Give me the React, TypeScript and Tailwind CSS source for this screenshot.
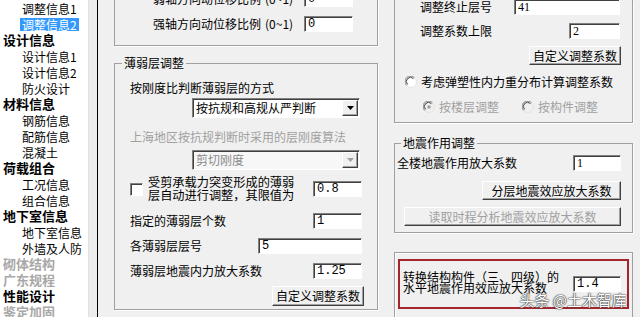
import React from "react";

const sunken =
  "border border-t-[#808080] border-l-[#808080] border-b-white border-r-white shadow-[inset_1px_1px_0_#404040]";
const raised =
  "border border-t-white border-l-white border-b-[#404040] border-r-[#404040] shadow-[inset_-1px_-1px_0_#a0a0a0]";

type Item = { t: string; lvl: number; sel?: boolean; dis?: boolean };
const tree: Item[] = [
  { t: "调整信息1", lvl: 1 },
  { t: "调整信息2", lvl: 1, sel: true },
  { t: "设计信息", lvl: 0 },
  { t: "设计信息1", lvl: 1 },
  { t: "设计信息2", lvl: 1 },
  { t: "防火设计", lvl: 1 },
  { t: "材料信息", lvl: 0 },
  { t: "钢筋信息", lvl: 1 },
  { t: "配筋信息", lvl: 1 },
  { t: "混凝土", lvl: 1 },
  { t: "荷载组合", lvl: 0 },
  { t: "工况信息", lvl: 1 },
  { t: "组合信息", lvl: 1 },
  { t: "地下室信息", lvl: 0 },
  { t: "地下室信息", lvl: 1 },
  { t: "外墙及人防", lvl: 1 },
  { t: "砌体结构", lvl: 0, dis: true },
  { t: "广东规程", lvl: 0, dis: true },
  { t: "性能设计", lvl: 0 },
  { t: "鉴定加固", lvl: 0, dis: true },
];

function Sidebar() {
  return (
    <div className="w-[88px] shrink-0 bg-white flex flex-col">
      {tree.map((it, i) => (
        <div key={i} className="h-[16px] shrink-0 flex items-center">
          {it.lvl === 0 ? (
            <span
              className={`pl-[3px] text-[13px] leading-[14px] font-bold ${
                it.dis ? "text-[#a8a8a8]" : "text-black"
              }`}
            >
              {it.t}
            </span>
          ) : (
            <span
              className={`ml-[20px] px-[2px] text-[12px] leading-[13px] ${
                it.sel ? "bg-[#3399ff] text-white" : "text-black"
              }`}
            >
              {it.t}
            </span>
          )}
        </div>
      ))}
    </div>
  );
}

function Input({ v, w, serif }: { v: string; w: string; serif?: boolean }) {
  return (
    <div
      className={`${sunken} ${w} h-[16px] shrink-0 bg-white flex items-center pl-[3px] text-[12px] leading-[14px] ${
        serif
          ? "font-['Liberation_Serif',serif]"
          : "font-['Liberation_Mono',monospace]"
      }`}
    >
      {v}
    </div>
  );
}

function Arrow({ color }: { color: string }) {
  return (
    <svg width="7" height="4" viewBox="0 0 7 4">
      <path d="M0 0H7L3.5 4Z" fill={color} />
    </svg>
  );
}

function Select({ v, disabled }: { v: string; disabled?: boolean }) {
  return (
    <div
      className={`${sunken} ml-[62px] w-[168px] h-[20px] flex ${
        disabled ? "bg-[#f7f7f7]" : "bg-white"
      }`}
    >
      <div
        className={`flex-1 flex items-center pl-[3px] ${
          disabled ? "text-[#8a8a8a]" : "text-black"
        }`}
      >
        {v}
      </div>
      <div
        className={`${raised} w-[16px] m-[1px] bg-[#f0f0f0] flex items-center justify-center`}
      >
        <Arrow color={disabled ? "#a0a0a0" : "#000"} />
      </div>
    </div>
  );
}

function Button({
  children,
  w,
  h,
  disabled,
  cls,
}: {
  children: React.ReactNode;
  w: string;
  h: string;
  disabled?: boolean;
  cls?: string;
}) {
  return (
    <div
      className={`${raised} ${w} ${h} ${cls ?? ""} bg-[#f0f0f0] flex items-center justify-center text-[12px] leading-[14px] ${
        disabled ? "text-[#a0a0a0]" : "text-black"
      }`}
    >
      {children}
    </div>
  );
}

function Radio({ checked, disabled }: { checked?: boolean; disabled?: boolean }) {
  return (
    <svg width="12" height="12" viewBox="0 0 12 12" className="shrink-0">
      <circle cx="6" cy="6" r="5.5" fill={disabled ? "#f0f0f0" : "#fff"} stroke="#e3e3e3" />
      <path d="M1.6 9.4 A5.2 5.2 0 0 1 9.4 1.6" stroke="#808080" fill="none" />
      <path d="M2.6 8.4 A4 4 0 0 1 8.4 2.6" stroke="#404040" fill="none" />
      {checked && <circle cx="6" cy="6" r="1.8" fill={disabled ? "#a0a0a0" : "#000"} />}
    </svg>
  );
}

function LeftColumn() {
  return (
    <div className="w-[264px] shrink-0 flex flex-col">
      {/* top (cut-off) group */}
      <div className="h-[46px] border-l border-r border-b border-[#a0a0a0] shadow-[1px_1px_0_#fff] flex flex-col pl-[38px] pr-[24px]">
        <div className="-mt-[9px] h-[16px] flex items-center justify-between">
          <span>
            弱轴方向动位移比例<span className="ml-[4px]">(0~1)</span>
          </span>
          <Input v="0" w="w-[49px]" />
        </div>
        <div className="mt-[9px] h-[16px] flex items-center justify-between">
          <span>
            强轴方向动位移比例<span className="ml-[4px]">(0~1)</span>
          </span>
          <Input v="0" w="w-[49px]" />
        </div>
      </div>

      <fieldset className="mt-[10px] border border-[#a0a0a0] shadow-[1px_1px_0_#fff] min-w-0">
        <legend className="ml-[7px] px-[2px] leading-[14px]">薄弱层调整</legend>
        <div className="flex flex-col pl-[15px] pr-[15px] pb-[3px]">
          <div className="mt-[11px] h-[14px] flex items-center">按刚度比判断薄弱层的方式</div>
          <div className="mt-[3px]">
            <Select v="按抗规和高规从严判断" />
          </div>
          <div className="mt-[12px] h-[14px] flex items-center text-[#a0a0a0]">
            上海地区按抗规判断时采用的层刚度算法
          </div>
          <div className="mt-[6px]">
            <Select v="剪切刚度" disabled />
          </div>
          <div className="mt-[6px] h-[26px] flex items-center">
            <div className={`${sunken} w-[13px] h-[13px] bg-white shrink-0`} />
            <div className="ml-[5px] w-[150px] leading-[13px] text-[12.2px]">
              受剪承载力突变形成的薄弱
              <br />
              层自动进行调整，其限值为
            </div>
            <div className="ml-auto">
              <Input v="0.8" w="w-[49px]" />
            </div>
          </div>
          <div className="mt-[11px] h-[16px] flex items-center justify-between">
            <span>指定的薄弱层个数</span>
            <Input v="1" w="w-[49px]" />
          </div>
          <div className="mt-[9px] h-[16px] flex items-center justify-between">
            <span>各薄弱层层号</span>
            <Input v="5" w="w-[104px]" />
          </div>
          <div className="mt-[9px] h-[16px] flex items-center justify-between">
            <span>薄弱层地震内力放大系数</span>
            <Input v="1.25" w="w-[49px]" />
          </div>
          <div className="mt-[7px] flex justify-end -mr-[2px]">
            <Button w="w-[92px]" h="h-[20px]">
              自定义调整系数
            </Button>
          </div>
        </div>
      </fieldset>
    </div>
  );
}

function RightColumn() {
  return (
    <div className="w-[239px] shrink-0 flex flex-col">
      {/* top (cut-off) group */}
      <div className="border-l border-r border-b border-[#a0a0a0] shadow-[1px_1px_0_#fff] flex flex-col pb-[8px]">
        <div className="-mt-[1px] h-[16px] flex items-center pl-[25px] pr-[12px]">
          <span>调整终止层号</span>
          <div className="ml-auto">
            <Input v="41" w="w-[106px]" serif />
          </div>
        </div>
        <div className="mt-[8px] h-[16px] flex items-center pl-[25px] pr-[12px]">
          <span>调整系数上限</span>
          <div className="ml-auto">
            <Input v="2" w="w-[51px]" serif />
          </div>
        </div>
        <div className="mt-[7px] flex justify-end pr-[11px]">
          <Button w="w-[92px]" h="h-[19px]">
            自定义调整系数
          </Button>
        </div>
        <div className="mt-[10px] h-[14px] flex items-center pl-[10px]">
          <Radio />
          <span className="ml-[4px]">考虑弹塑性内力重分布计算调整系数</span>
        </div>
        <div className="mt-[11px] h-[14px] flex items-center pl-[28px] text-[#a0a0a0]">
          <Radio checked disabled />
          <span className="ml-[4px]">按楼层调整</span>
          <div className="ml-[23px] flex items-center">
            <Radio disabled />
            <span className="ml-[4px]">按构件调整</span>
          </div>
        </div>
      </div>

      <fieldset className="mt-[13px] border border-[#a0a0a0] shadow-[1px_1px_0_#fff] min-w-0">
        <legend className="ml-[6px] px-[2px] leading-[14px]">地震作用调整</legend>
        <div className="flex flex-col pl-[2px] pr-[11px] pb-[6px]">
          <div className="mt-[5px] h-[16px] flex items-center justify-between">
            <span>全楼地震作用放大系数</span>
            <Input v="1" w="w-[48px]" serif />
          </div>
          <div className="mt-[10px] flex justify-end">
            <Button w="w-[139px]" h="h-[19px]">
              分层地震效应放大系数
            </Button>
          </div>
          <div className="mt-[7px] flex justify-end">
            <Button w="w-[217px]" h="h-[19px]" disabled>
              读取时程分析地震效应放大系数
            </Button>
          </div>
        </div>
      </fieldset>

      <div className="mt-[19px] flex-1 border-l border-r border-t border-[#a0a0a0] shadow-[inset_1px_1px_0_#fff] flex flex-col">
        <div className="relative mt-[6px] ml-[3px] w-[231px] h-[50px] border-2 border-[#a4262c] flex items-start">
          <div className="mt-[10px] ml-[3px] leading-[11px] text-[12px]">
            转换结构构件（三、四级）的
            <br />
            水平地震作用效应放大系数
          </div>
          <div className="ml-auto mr-[6px] mt-[15px]">
            <Input v="1.4" w="w-[48px]" />
          </div>
          <div className="absolute right-[0px] bottom-[-1px] text-[15px] leading-[16px] text-white [text-shadow:0_0_1px_#333,0_0_1px_#333,0_0_2px_#555] whitespace-nowrap">
            头条 @土木智库
          </div>
        </div>
      </div>
    </div>
  );
}

export default function App() {
  return (
    <div className="flex w-[640px] h-[317px] overflow-hidden bg-[#f0f0f0] font-['Noto_Sans_CJK_SC',sans-serif] text-[12px] leading-[14px] text-black">
      <Sidebar />
      <div className="w-[9px] shrink-0 bg-[#ececec] border-l border-[#e0e0e0]" />
      <div className="w-px shrink-0 bg-black" />
      <div className="flex-1 flex gap-[16px] pl-[16px]">
        <LeftColumn />
        <RightColumn />
      </div>
    </div>
  );
}
